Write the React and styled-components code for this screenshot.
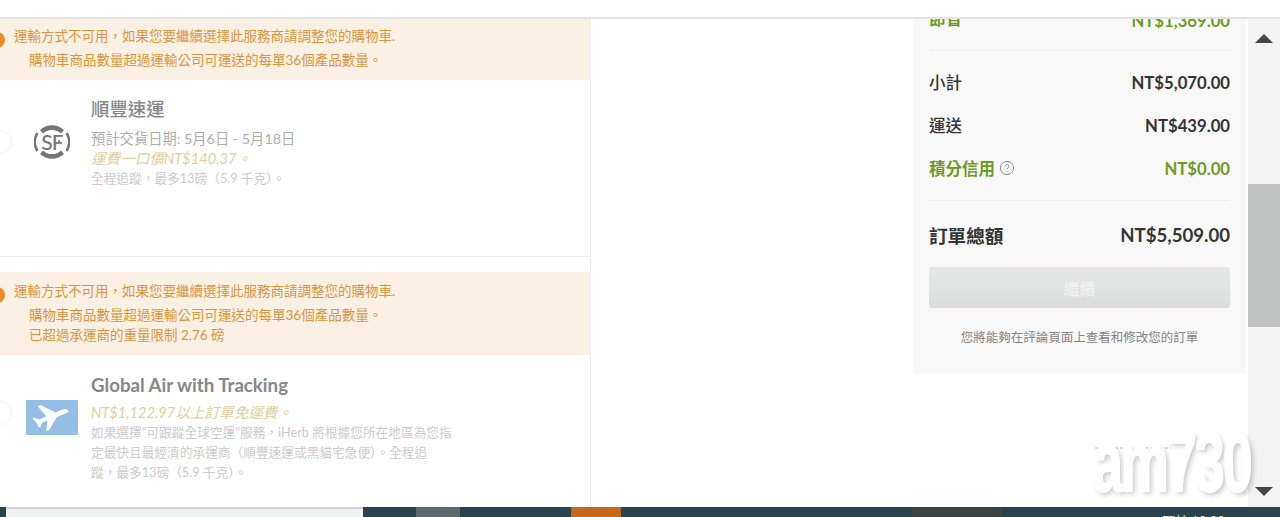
import React from "react";
import styled, { createGlobalStyle } from "styled-components";
import { CircleHelp } from "lucide-react";

const GlobalStyle = createGlobalStyle`
  html, body {
    margin: 0;
    padding: 0;
    background: #fff;
    overflow: hidden;
  }
  * {
    box-sizing: border-box;
  }
`;

const Page = styled.div`
  position: relative;
  display: flex;
  flex-direction: column;
  width: 1280px;
  height: 517px;
  overflow: hidden;
  font-family: Lato, "Noto Sans CJK TC", sans-serif;
  background: #fff;
`;

const TopBar = styled.div`
  flex: none;
  height: 19px;
  background: #fff;
  border-bottom: 2px solid #e3e4e4;
`;

const Main = styled.div`
  flex: 1;
  min-height: 0;
  display: flex;
`;

const ShippingColumn = styled.div`
  flex: none;
  width: 591px;
  border-right: 1px solid #eeeeee;
`;

const Alert = styled.div`
  position: relative;
  height: ${(p) => p.$height}px;
  margin-top: ${(p) => p.$gap || 0}px;
  padding: ${(p) => p.$top}px 0 0 14px;
  background: #faf0e3;
  color: #d8963f;
  font-size: 13.5px;
  line-height: 24px;
  white-space: nowrap;
`;

const AlertDot = styled.span`
  position: absolute;
  left: -11px;
  top: ${(p) => p.$top}px;
  width: 16px;
  height: 16px;
  border-radius: 50%;
  background: #ec8a24;
`;

const AlertMore = styled.div`
  padding-left: 15px;
  line-height: ${(p) => p.$line}px;
`;

const MethodCard = styled.div`
  display: flex;
  position: relative;
  height: ${(p) => p.$height}px;
  padding-top: ${(p) => p.$top}px;
  border-bottom: ${(p) => (p.$divided ? "1px solid #ececec" : "none")};
`;

const Radio = styled.span`
  position: absolute;
  left: -12px;
  top: ${(p) => p.$top}px;
  width: 24px;
  height: 24px;
  border-radius: 50%;
  border: 1px solid #f3f3f3;
`;

const LogoSlot = styled.div`
  flex: none;
  width: 91px;
  padding-top: ${(p) => p.$top}px;
  padding-left: ${(p) => p.$left}px;
`;

const MethodBody = styled.div`
  width: 380px;
`;

const MethodTitle = styled.div`
  height: 30px;
  color: #85878a;
  font-size: ${(p) => (p.$latin ? 18.7 : 18.4)}px;
  font-weight: ${(p) => (p.$latin ? 700 : 500)};
  line-height: 30px;
`;

const MethodDate = styled.div`
  margin-top: 5px;
  color: #aeaeae;
  font-size: 14.3px;
  line-height: 20px;
`;

const MethodPrice = styled.div`
  margin-top: ${(p) => p.$top || 0}px;
  color: #e1cf9d;
  font-size: 14.6px;
  font-style: italic;
  line-height: 20px;
`;

const MethodNote = styled.div`
  margin-top: -1px;
  color: #cbcbcb;
  font-size: 12.7px;
  line-height: 20px;
`;

const Spacer = styled.div`
  flex: none;
  width: 322px;
`;

const SummaryPanel = styled.div`
  flex: none;
  width: 333px;
  height: 354px;
  padding: 0 16px;
  overflow: hidden;
  background: #f8f8f8;
`;

const CutRow = styled.div`
  display: flex;
  justify-content: space-between;
  margin-top: -11px;
  height: 43px;
  color: #6f9a1f;
  font-size: 16.5px;
  font-weight: 700;
  line-height: 22px;
  border-bottom: 1px solid #eeeeee;
`;

const Rows = styled.div`
  padding: 9px 0 11px;
  border-bottom: 1px solid #eeeeee;
`;

const Row = styled.div`
  display: flex;
  justify-content: space-between;
  align-items: center;
  height: 43px;
  color: ${(p) => (p.$green ? "#6f9a1f" : "#333333")};
  font-size: 16.5px;
  font-weight: ${(p) => (p.$green ? 700 : 500)};
`;

const RowAmount = styled.span`
  padding-top: 2px;
  font-weight: 700;
  font-size: 16.7px;
`;

const HelpLabel = styled.span`
  display: flex;
  align-items: center;
  gap: 4px;
  color: #6f9a1f;
`;

const TotalRow = styled.div`
  display: flex;
  justify-content: space-between;
  align-items: center;
  height: 66px;
  color: #333333;
  font-size: 18.6px;
  font-weight: 700;
`;

const TotalAmount = styled.span`
  padding-top: 2px;
`;

const ContinueButton = styled.div`
  display: flex;
  align-items: center;
  justify-content: center;
  height: 41px;
  border-radius: 3px;
  background: linear-gradient(#e6e7e7, #dcdedd);
  color: #f2f2f2;
  font-size: 16px;
  font-weight: 500;
`;

const ReviewNote = styled.div`
  margin-top: 20px;
  color: #848484;
  font-size: 12.5px;
  line-height: 20px;
  text-align: center;
`;

const Scrollbar = styled.div`
  flex: none;
  display: flex;
  flex-direction: column;
  width: 32px;
  margin-left: 2px;
  background: #f3f3f3;
`;

const ScrollTrack = styled.div`
  flex: none;
  height: ${(p) => p.$height}px;
  padding-top: ${(p) => p.$top}px;
  display: flex;
  justify-content: center;
`;

const ScrollThumb = styled.div`
  flex: none;
  height: 143px;
  background: #c0c2c1;
`;

const Arrow = styled.span`
  width: 0;
  height: 0;
  border-left: 9px solid transparent;
  border-right: 9px solid transparent;
  ${(p) => (p.$down ? "border-top" : "border-bottom")}: 9px solid #444444;
`;

const Footer = styled.div`
  flex: none;
  display: flex;
  height: 10px;
  overflow: hidden;
  background: #2a444d;
`;

const FooterPart = styled.div`
  flex: ${(p) => (p.$grow ? 1 : "none")};
  width: ${(p) => p.$width}px;
  background: ${(p) => p.$color};
  border-top: ${(p) => (p.$line ? "2px solid #cfd1d1" : "none")};
`;

const FooterText = styled.div`
  flex: none;
  width: ${(p) => p.$width}px;
  padding-top: 5px;
  color: #e8eced;
  font-size: 13px;
  line-height: 18px;
  white-space: nowrap;
`;

const Watermark = styled.div`
  position: absolute;
  left: 1093px;
  top: 424px;
  width: 170px;
  height: 76px;
  pointer-events: none;
`;

const WatermarkTop = styled.div`
  position: absolute;
  left: 2px;
  top: 23px;
  width: 76px;
  height: 2px;
  background: repeating-linear-gradient(90deg, #b9b9b9 0 3px, transparent 3px 5px);
  opacity: 0.5;
`;

const WatermarkText = styled.div`
  position: absolute;
  left: 0;
  bottom: -4px;
  color: #fff;
  font-family: "Liberation Sans", sans-serif;
  font-size: 84px;
  font-weight: 700;
  line-height: 84px;
  letter-spacing: -3px;
  white-space: nowrap;
  -webkit-text-stroke: 2px #fff;
  transform: scaleX(0.64);
  transform-origin: left bottom;
  text-shadow: 4px 3px 6px rgba(0, 0, 0, 0.22);
`;

function SfLogo() {
  return (
    <svg width="36" height="36" viewBox="0 0 36 36" fill="none">
      <path d="M6 6 A17.5 17.5 0 0 1 30 6 L27 9.5 A13 13 0 0 0 9 9.5 Z" fill="#757575" />
      <path d="M6 30 A17.5 17.5 0 0 0 30 30 L27 26.5 A13 13 0 0 1 9 26.5 Z" fill="#757575" />
      <path d="M3.5 9 A16 16 0 0 0 3.5 27" stroke="#757575" strokeWidth="2.5" />
      <path d="M32.5 9 A16 16 0 0 1 32.5 27" stroke="#757575" strokeWidth="2.5" />
      <text x="18" y="25.5" textAnchor="middle" fontFamily="Lato, sans-serif" fontSize="21" fontWeight="500" letterSpacing="-1" fill="#757575">
        SF
      </text>
      <circle cx="25" cy="17" r="1" fill="#d9455a" />
    </svg>
  );
}

function PlaneBadge() {
  return (
    <svg width="52" height="35" viewBox="0 0 52 35">
      <rect width="52" height="35" rx="1" fill="#93bfe6" />
      <path
        d="M42.5 11 C41 8.8 37.5 9 35 10 L29.5 12.4 L14.5 5 L11.5 6.2 L20.5 16.2 L13.5 19.4 L8.5 17.8 L6.5 18.8 L11 23.5 L12.5 27.5 L14.5 26.8 L16 22.8 L21.5 20.5 L20 31 L23 30 L31 17 L38 14 C40.5 13 43 12.3 42.5 11 Z"
        fill="#fff"
      />
    </svg>
  );
}

export default function App() {
  return (
    <Page>
      <GlobalStyle />
      <TopBar />
      <Main>
        <ShippingColumn>
          <Alert $height={61} $top={5}>
            <AlertDot $top={13} />
            運輸方式不可用，如果您要繼續選擇此服務商請調整您的購物車.
            <AlertMore $line={24}>購物車商品數量超過運輸公司可運送的每單36個產品數量。</AlertMore>
          </Alert>
          <MethodCard $height={177} $top={14} $divided>
            <Radio $top={50} />
            <LogoSlot $top={30} $left={34}>
              <SfLogo />
            </LogoSlot>
            <MethodBody>
              <MethodTitle>順豐速運</MethodTitle>
              <MethodDate>預計交貨日期: 5月6日 - 5月18日</MethodDate>
              <MethodPrice>運費一口價NT$140.37。</MethodPrice>
              <MethodNote>全程追蹤，最多13磅（5.9 千克）。</MethodNote>
            </MethodBody>
          </MethodCard>
          <Alert $height={83} $top={7} $gap={15}>
            <AlertDot $top={15} />
            運輸方式不可用，如果您要繼續選擇此服務商請調整您的購物車.
            <AlertMore $line={24}>購物車商品數量超過運輸公司可運送的每單36個產品數量。</AlertMore>
            <AlertMore $line={16}>已超過承運商的重量限制 2.76 磅</AlertMore>
          </Alert>
          <MethodCard $height={150} $top={15}>
            <Radio $top={46} />
            <LogoSlot $top={30} $left={26}>
              <PlaneBadge />
            </LogoSlot>
            <MethodBody>
              <MethodTitle $latin>Global Air with Tracking</MethodTitle>
              <MethodPrice $top={3}>NT$1,122.97以上訂單免運費。</MethodPrice>
              <MethodNote>
                如果選擇"可跟蹤全球空運"服務，iHerb 將根據您所在地區為您指
                <br />
                定最快且最經濟的承運商（順豐速運或黑貓宅急便）。全程追
                <br />
                蹤，最多13磅（5.9 千克）。
              </MethodNote>
            </MethodBody>
          </MethodCard>
        </ShippingColumn>
        <Spacer />
        <SummaryPanel>
          <CutRow>
            <span>節省</span>
            <RowAmount>NT$1,369.00</RowAmount>
          </CutRow>
          <Rows>
            <Row>
              <span>小計</span>
              <RowAmount>NT$5,070.00</RowAmount>
            </Row>
            <Row>
              <span>運送</span>
              <RowAmount>NT$439.00</RowAmount>
            </Row>
            <Row $green>
              <HelpLabel>
                積分信用
                <CircleHelp size={16} strokeWidth={1.25} color="#777" />
              </HelpLabel>
              <RowAmount>NT$0.00</RowAmount>
            </Row>
          </Rows>
          <TotalRow>
            <span>訂單總額</span>
            <TotalAmount>NT$5,509.00</TotalAmount>
          </TotalRow>
          <ContinueButton>繼續</ContinueButton>
          <ReviewNote>您將能夠在評論頁面上查看和修改您的訂單</ReviewNote>
        </SummaryPanel>
        <Scrollbar>
          <ScrollTrack $height={165} $top={15}>
            <Arrow />
          </ScrollTrack>
          <ScrollThumb />
          <ScrollTrack $height={180} $top={160}>
            <Arrow $down />
          </ScrollTrack>
        </Scrollbar>
      </Main>
      <Footer>
        <FooterPart $width={6} $color="#2a444d" />
        <FooterPart $width={357} $color="#f1f2f2" $line />
        <FooterPart $width={53} $color="#2a444d" />
        <FooterPart $width={44} $color="#5c6a6d" />
        <FooterPart $width={111} $color="#2a444d" />
        <FooterPart $width={50} $color="#c4681c" />
        <FooterPart $width={291} $color="#2a444d" />
        <FooterPart $width={90} $color="#3d4343" />
        <FooterPart $width={160} $color="#2a444d" />
        <FooterText $width={115}>預計 10:00</FooterText>
      </Footer>
      <Watermark>
        <WatermarkTop />
        <WatermarkText>am730</WatermarkText>
      </Watermark>
    </Page>
  );
}
